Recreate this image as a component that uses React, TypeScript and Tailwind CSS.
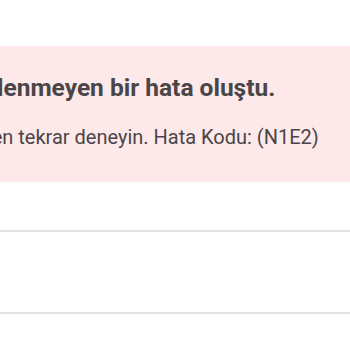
import React from 'react';

export default function App() {
    return (
        <div className="w-[350px] h-[350px] overflow-hidden bg-white" style={{ fontFamily: 'Roboto, "Noto Sans", sans-serif' }}>
            <div className="h-[46px]" />
            <div className="h-[136px] bg-[#fde9ea] -ml-[43px] w-[393px] pt-[28px] text-[#4a4547]">
                <p className="-ml-[2px] text-[24.5px] leading-[28px] font-bold whitespace-nowrap">Beklenmeyen bir hata oluştu.</p>
                <p className="mt-[23px] text-[20px] leading-[24px] whitespace-nowrap">Lütfen tekrar deneyin. Hata Kodu: (N1E2)</p>
            </div>
            <div className="h-[48px]" />
            <div className="h-[2px] bg-[#e2e2e2]" />
            <div className="h-[80px]" />
            <div className="h-[2px] bg-[#e2e2e2]" />
        </div>
    );
}
